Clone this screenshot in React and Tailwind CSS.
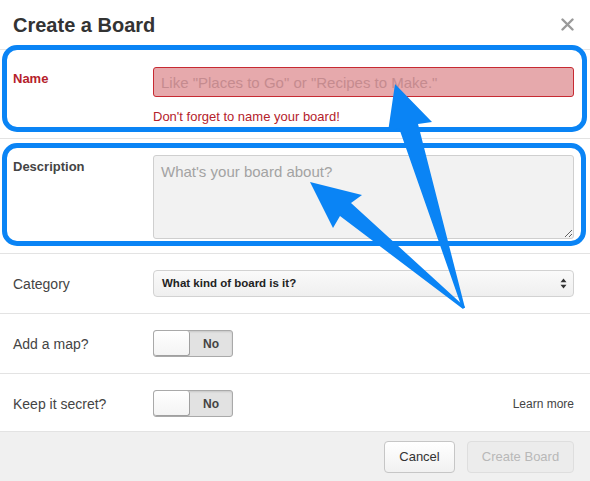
import React from 'react';

const Toggle = () => (
  <div className="flex h-[27px] w-[80px] overflow-hidden rounded-[3px] border border-[#a9a9a9] bg-[#e2e2e2] shadow-[inset_0_1px_2px_rgba(0,0,0,0.12)]">
    <div className="h-full w-[36px] rounded-[3px] border-r border-b border-[#a0a0a0] bg-gradient-to-b from-white to-[#f4f4f4]" />
    <div className="flex flex-1 items-center justify-center text-[12px] font-bold text-[#444]">No</div>
  </div>
);

const Row = ({ label, labelClass, children, className, center }) => (
  <div className={`flex border-b border-[#e3e3e3] pl-[13px] pr-[16px] ${center ? 'items-center' : 'items-start'} ${className}`}>
    <div className={`w-[140px] shrink-0 leading-[16px] ${labelClass}`}>{label}</div>
    <div className="flex flex-1 items-center">{children}</div>
  </div>
);

export default function App() {
  return (
    <div className="relative h-[481px] w-[590px] overflow-hidden bg-white font-['Liberation_Sans',Arial,sans-serif]">
      {/* header */}
      <div className="flex h-[50px] items-center justify-between border-b border-[#e6e6e6] pl-[13px] pr-[16px]">
        <h1 className="text-[20px] font-bold text-[#333]">Create a Board</h1>
        <svg width="13" height="13" viewBox="0 0 13 13">
          <path d="M1.5 1.5 L11.5 11.5 M11.5 1.5 L1.5 11.5" stroke="#9a9a9a" strokeWidth="2.4" strokeLinecap="round" />
        </svg>
      </div>

      {/* name */}
      <Row label="Name" labelClass="mt-[4px] text-[13px] font-bold text-[#b5222b]" className="pt-[17px] pb-[13px]">
        <div className="flex w-full flex-col">
          <input
            readOnly
            placeholder={'Like "Places to Go" or "Recipes to Make."'}
            className="h-[30px] w-full rounded-[3px] border border-[#c72a32] bg-[#e6a9ac] px-[7px] text-[15px] text-[#333] outline-none placeholder:text-[#c58b8f]"
          />
          <p className="mt-[12px] text-[13px] leading-[16px] text-[#b5222b]">Don't forget to name your board!</p>
        </div>
      </Row>

      {/* description */}
      <Row label="Description" labelClass="mt-[4px] text-[13px] font-bold text-[#444]" className="pt-[16px] pb-[14px]">
        <textarea
          readOnly
          placeholder="What's your board about?"
          className="block h-[84px] w-full resize-y rounded-[3px] border border-[#cfcfcf] bg-[#f2f2f2] px-[7px] py-[7px] text-[15px] leading-[18px] text-[#333] outline-none placeholder:text-[#a3a3a3]"
        />
      </Row>

      {/* category */}
      <Row center label="Category" labelClass="text-[14px] text-[#444]" className="pt-[16px] pb-[16px]">
        <div className="flex h-[27px] w-full items-center justify-between rounded-[4px] border border-[#d2d2d2] bg-gradient-to-b from-[#fafafa] to-[#efefef] pl-[8px] pr-[6px]">
          <span className="text-[11.5px] font-bold text-[#222]">What kind of board is it?</span>
          <svg width="7" height="11" viewBox="0 0 7 11">
            <path d="M3.5 0.5 L6.5 4.3 L0.5 4.3 Z M3.5 10.5 L6.5 6.7 L0.5 6.7 Z" fill="#333" />
          </svg>
        </div>
      </Row>

      {/* map */}
      <Row center label="Add a map?" labelClass="text-[14px] text-[#444]" className="pt-[16px] pb-[16px]">
        <Toggle />
      </Row>

      {/* secret */}
      <Row center label="Keep it secret?" labelClass="text-[14px] text-[#444]" className="pt-[16px] pb-[14px]">
        <div className="flex w-full items-center justify-between">
          <Toggle />
          <a className="text-[12px] text-[#444]">Learn more</a>
        </div>
      </Row>

      {/* footer */}
      <div className="flex h-[50px] items-center justify-end gap-[12px] bg-[#f0f0f0] pr-[16px]">
        <button className="h-[32px] w-[71px] rounded-[4px] border border-[#c6c6c6] bg-gradient-to-b from-white to-[#f1f1f1] text-[13px] text-[#333]">
          Cancel
        </button>
        <button className="h-[32px] w-[107px] rounded-[4px] border border-[#dedede] bg-[#ececec] text-[13px] text-[#b8b8b8]">
          Create Board
        </button>
      </div>

      {/* annotation outlines */}
      <div className="pointer-events-none absolute left-[2px] top-[45px] h-[87px] w-[585px] rounded-[15px] border-[5px] border-[#0a84f5]" />
      <div className="pointer-events-none absolute left-[2px] top-[143px] h-[103px] w-[584px] rounded-[15px] border-[5px] border-[#0a84f5]" />

      {/* annotation arrows */}
      <svg className="pointer-events-none absolute left-0 top-0" width="590" height="481" viewBox="0 0 590 481">
        <polygon points="395,84 432,122 418,124 465,308 462,308 399,128 388,132" fill="#0a84f5" />
        <polygon points="310,182 362,195 351,203 465,307 463,309 340,216 333,228" fill="#0a84f5" />
      </svg>
    </div>
  );
}
